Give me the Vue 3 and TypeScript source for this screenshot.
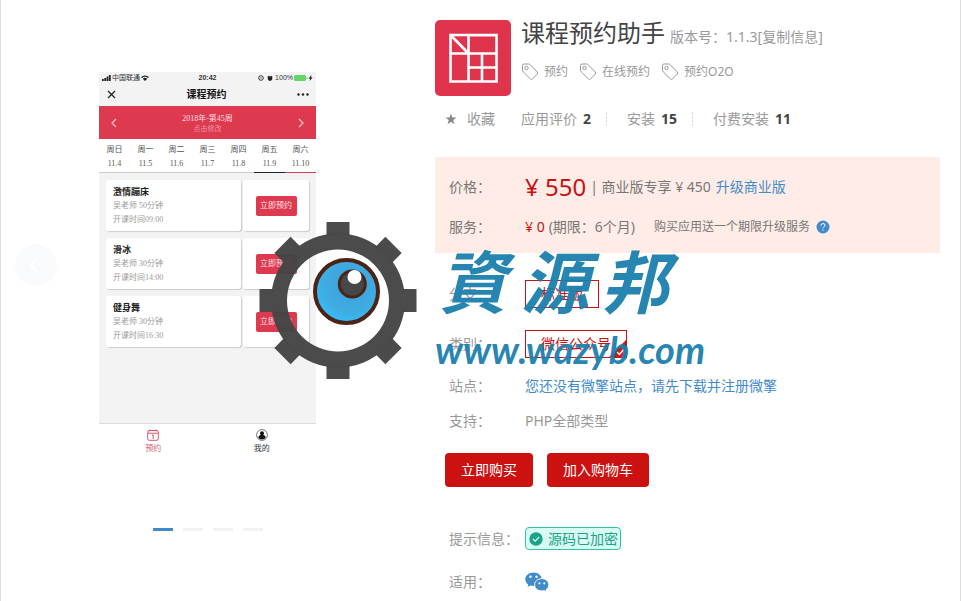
<script setup lang="ts">
import { ref } from 'vue'

interface Day { name: string; date: string }
interface Lesson { title: string; coach: string; time: string }
interface Stat { label: string; value: number }

const days: Day[] = [
  { name: '周日', date: '11.4' },
  { name: '周一', date: '11.5' },
  { name: '周二', date: '11.6' },
  { name: '周三', date: '11.7' },
  { name: '周四', date: '11.8' },
  { name: '周五', date: '11.9' },
  { name: '周六', date: '11.10' },
]

const lessons: Lesson[] = [
  { title: '激情蹦床', coach: '吴老师 50分钟', time: '开课时间09:00' },
  { title: '滑冰', coach: '吴老师 30分钟', time: '开课时间14:00' },
  { title: '健身舞', coach: '吴老师 30分钟', time: '开课时间16:30' },
]

const tags: string[] = ['预约', '在线预约', '预约O2O']

const stats: Stat[] = [
  { label: '应用评价', value: 2 },
  { label: '安装', value: 15 },
  { label: '付费安装', value: 11 },
]

const gearAngles: number[] = [0, 45, 90, 135, 180, 225, 270, 315]
const slideCount = 4
const slide = ref(0)

function previous(): void {
  slide.value = (slide.value + slideCount - 1) % slideCount
}
</script>

<template>
  <main class="page">
    <section class="gallery">
      <button class="prev" type="button" aria-label="上一张" @click="previous">
        <svg width="10" height="16" viewBox="0 0 10 16"><path d="M8 1 2 8l6 7" fill="none" stroke="#fff" stroke-width="2" /></svg>
      </button>

      <div class="phone">
        <div class="status">
          <span class="carrier">
            <svg width="9" height="6" viewBox="0 0 9 6"><path d="M0 4h1.8v2H0zM2.3 3h1.8v3H2.3zM4.6 1.5h1.8V6H4.6zM6.9 0h1.8v6H6.9z" fill="#222" /></svg>
            中国联通
            <svg width="8" height="6" viewBox="0 0 8 6"><path d="M0 2a6 6 0 0 1 8 0L7 3a4.500 4.500 0 0 0-6 0zM1.700 3.700a3.400 3.400 0 0 1 4.600 0L4 6z" fill="#222" /></svg>
          </span>
          <span class="clock">20:42</span>
          <span class="battery">
            <svg width="16" height="6" viewBox="0 0 16 6"><circle cx="3" cy="3" r="2.300" fill="none" stroke="#333" /><path d="M2 3h2M10 1l1 .500h2L14 1v3.500L12 6l-2-1.500z" fill="#222" stroke="#222" stroke-width=".5" /></svg>
            100%
            <svg width="19" height="6" viewBox="0 0 19 6"><rect x="0" y="0" width="12" height="6" rx="1.500" fill="#63d765" /><path d="M13 2v2" stroke="#aaa" /><path d="m17.500 0-3 3.500h1.600L15.600 6l3-3.500h-1.600z" fill="#222" /></svg>
          </span>
        </div>
        <div class="bar">
          <svg width="9" height="9" viewBox="0 0 9 9"><path d="m1 1 7 7M8 1 1 8" stroke="#222" stroke-width="1.300" /></svg>
          <b>课程预约</b>
          <svg width="12" height="3" viewBox="0 0 12 3"><g fill="#222"><circle cx="1.500" cy="1.500" r="1.200" /><circle cx="6" cy="1.500" r="1.200" /><circle cx="10.500" cy="1.500" r="1.200" /></g></svg>
        </div>
        <div class="week">
          <svg width="6" height="10" viewBox="0 0 6 10"><path d="M5 1 1 5l4 4" fill="none" stroke="#f7c3ca" stroke-width="1.200" /></svg>
          <div class="week-text"><span>2018年-第45周</span><small>点击修改</small></div>
          <svg width="6" height="10" viewBox="0 0 6 10"><path d="m1 1 4 4-4 4" fill="none" stroke="#f7c3ca" stroke-width="1.200" /></svg>
        </div>
        <div class="days">
          <div v-for="d in days" :key="d.date" class="day"><span>{{ d.name }}</span><span>{{ d.date }}</span></div>
        </div>
        <div class="lessons">
          <article v-for="l in lessons" :key="l.title" class="lesson">
            <div class="lesson-info"><b>{{ l.title }}</b><span>{{ l.coach }}</span><span>{{ l.time }}</span></div>
            <div class="lesson-side"><button type="button" class="book">立即预约</button></div>
          </article>
        </div>
        <div class="tabs">
          <span class="tab tab-on">
            <svg width="12" height="12" viewBox="0 0 12 12"><rect x=".7" y="1.500" width="10.600" height="9.800" rx="1.500" fill="none" stroke="#d4596a" /><path d="M1 4.200h10M3 .500v2M9 .500v2M5 6.500l1.200-.7V10" fill="none" stroke="#d4596a" /></svg>
            预约
          </span>
          <span class="tab">
            <svg width="12" height="12" viewBox="0 0 12 12"><circle cx="6" cy="6" r="5.400" fill="none" stroke="#555" stroke-width=".8" /><circle cx="6" cy="4.300" r="2" fill="#111" /><path d="M2.300 8.500C2.500 6.500 4 6 6 6s3.500.500 3.700 2.500C8.500 11 3.500 11 2.300 8.500z" fill="#111" /></svg>
            我的
          </span>
        </div>
      </div>

      <div class="dots">
        <button v-for="n in slideCount" :key="n" type="button" class="dot" :class="{ current: slide === n - 1 }" :aria-label="'第' + n + '张'" @click="slide = n - 1"></button>
      </div>
    </section>

    <section class="detail">
      <header class="head">
        <svg class="logo" width="76" height="76" viewBox="0 0 76 76">
          <rect width="76" height="76" rx="5" fill="#e0344d" />
          <path d="M15.500 15h46v46.500h-46zM33.500 15v46.500M15.500 33.500h46M47 33.500v28M33.500 47.500h28M15.500 15l18 18.500" fill="none" stroke="#fff" stroke-width="2.600" />
          <path d="M35 16.300h25.200v-1.300H35z" fill="#fff" />
        </svg>
        <div class="head-text">
          <h1>课程预约助手<small>版本号：1.1.3[复制信息]</small></h1>
          <ul class="tags">
            <li v-for="t in tags" :key="t">
              <svg width="18" height="18" viewBox="0 0 18 18"><path d="M1.500 2.500q0-1.500 1.500-1.500h4.500q1 0 1.600.6L16.300 9q1 1 0 2l-4.800 5q-1 1-2 0L2.200 8.800q-.7-.7-.7-1.600z" fill="none" stroke="#999" /><circle cx="5.500" cy="5" r="1.700" fill="none" stroke="#999" /></svg>
              {{ t }}
            </li>
          </ul>
        </div>
      </header>

      <div class="stats">
        <button type="button" class="favorite">
          <svg width="12" height="12" viewBox="0 0 12 12"><path d="m6 .500 1.400 4h4.200L8.200 7l1.300 4.200L6 8.700l-3.500 2.500L3.800 7 .4 4.500h4.200z" fill="#888" /></svg>
          收藏
        </button>
        <span v-for="s in stats" :key="s.label" class="stat">{{ s.label }}<b>{{ s.value }}</b></span>
      </div>

      <div class="price-box">
        <div class="row">
          <span class="label">价格：</span>
          <span class="value"><strong class="price">¥ 550</strong><span class="biz">| 商业版专享 ¥ 450</span><a href="#">升级商业版</a></span>
        </div>
        <div class="row">
          <span class="label">服务：</span>
          <span class="value">
            <span class="fee">¥ 0</span><span class="term">(期限：6个月)</span><span class="gift">购买应用送一个期限升级服务</span>
            <svg width="14" height="14" viewBox="0 0 14 14"><circle cx="7" cy="7" r="6.500" fill="#428bca" /><path d="M5 5.500q0-2 2-2t2 1.800q0 1-1.200 1.700-.8.500-.8 1.300M7 9.500v1.200" fill="none" stroke="#fff" /></svg>
          </span>
        </div>
      </div>

      <div class="options">
        <div class="row"><span class="label">分支：</span><button type="button" class="option">标准版</button></div>
        <div class="row"><span class="label">类别：</span>
          <button type="button" class="option">微信公众号
            <svg class="corner" width="17" height="17" viewBox="0 0 17 17"><path d="M17 0v17H0z" fill="#c81b1b" /><path d="m8 12 2.500 2.500L15 9" fill="none" stroke="#fff" stroke-width="1.400" /></svg>
          </button>
        </div>
      </div>
      <div class="facts">
        <div class="row"><span class="label">站点：</span><a href="#">您还没有微擎站点，请先下载并注册微擎</a></div>
        <div class="row"><span class="label">支持：</span><span>PHP全部类型</span></div>
      </div>
      <div class="actions">
        <button type="button" class="buy">立即购买</button>
        <button type="button" class="buy">加入购物车</button>
      </div>
      <div class="notes">
        <div class="row"><span class="label">提示信息：</span>
          <span class="badge">
            <svg width="14" height="14" viewBox="0 0 14 14"><circle cx="7" cy="7" r="6.700" fill="#1ba38a" /><path d="m4 7 2.200 2.200L10.200 5" fill="none" stroke="#d8fbf3" stroke-width="1.200" /></svg>
            源码已加密
          </span>
        </div>
        <div class="row"><span class="label">适用：</span>
          <svg width="24" height="20" viewBox="0 0 24 20">
            <path d="M8.500.500C4 .500.300 3.400.300 7.200c0 2.200 1.100 4 3 5.300L2.500 15l3-1.500q1.400.400 3 .4C13 13.900 16.700 11 16.700 7.200S13 .500 8.500.500z" fill="#428bca" />
            <path d="M16.800 6.600c-4 0-7.200 2.800-7.200 6.200s3.200 6.200 7.200 6.200q1.300 0 2.600-.4l2.500 1.100-.6-2.200c1.500-1.100 2.500-2.800 2.500-4.700 0-3.400-3.200-6.200-7-6.200z" fill="#428bca" stroke="#fff" />
            <g fill="#fff"><circle cx="5.500" cy="4.800" r="1.200" /><circle cx="11.500" cy="4.800" r="1.200" /><circle cx="14.400" cy="11.300" r="1.100" /><circle cx="19.300" cy="11.300" r="1.100" /></g>
          </svg>
        </div>
      </div>
    </section>

    <svg class="watermark" width="480" height="158" viewBox="0 0 480 158">
      <g transform="translate(81 78.500)" fill="#454545" fill-opacity=".97">
        <path fill-rule="evenodd" d="M0-67a67 67 0 1 0 0 134a67 67 0 1 0 0-134zM0-51a51 51 0 1 1 0 102a51 51 0 1 1 0-102z" />
        <path v-for="a in gearAngles" :key="a" d="M-11.500-78.500h23V-65q-11.500-3-23 0z" :transform="`rotate(${a})`" />
      </g>
      <defs>
        <radialGradient id="iris" cx=".56" cy=".4" r=".62">
          <stop offset="0" stop-color="#3c9fd8" /><stop offset=".72" stop-color="#3fade3" /><stop offset="1" stop-color="#35c0ff" />
        </radialGradient>
      </defs>
      <circle cx="89.500" cy="69.500" r="31.500" fill="url(#iris)" stroke="#4a2517" stroke-width="4" />
      <circle cx="95.300" cy="62" r="13" fill="#474747" stroke="#4a2517" stroke-width="3" />
      <circle cx="97.500" cy="55" r="7" fill="#fff" />
      <g class="brand">
        <text x="182" y="86">資</text><text x="264" y="86">源</text><text x="344" y="86">邦</text>
      </g>
      <text class="site" x="178" y="142">www.wazyb.com</text>
    </svg>
  </main>
</template>

<style>
body { margin: 0; background: #fff; }
</style>

<style scoped>
.page {
  position: relative;
  display: flex;
  box-sizing: border-box;
  min-height: 100vh;
  border: solid #ddd;
  border-width: 0 1px;
  color: #999;
  font: 14px/20px "Noto Sans", "Noto Sans CJK SC", sans-serif;
}
button { font: inherit; padding: 0; border: 0; cursor: pointer; }
a { color: #428bca; text-decoration: none; }
svg { flex: none; }

.gallery { position: relative; flex: 0 0 413px; padding-top: 72px; margin-right: 21px; }
.prev {
  position: absolute; left: 14px; top: 244px; width: 42px; height: 42px;
  display: flex; align-items: center; justify-content: center;
  padding-right: 4px; border-radius: 50%; background: #f8fafc;
}
.phone {
  width: 217px; margin: 0 auto; background: #f3f3f3; color: #333;
  font: 8px/10px "Liberation Serif", "Noto Sans CJK SC", serif;
}
.status {
  display: grid; grid-template-columns: 1fr auto 1fr; align-items: center;
  height: 11px; padding: 0 3px; font-family: "Liberation Sans", "Noto Sans CJK SC", sans-serif; font-size: 7px;
}
.carrier, .battery { display: flex; align-items: center; gap: 1px; white-space: nowrap; }
.battery { justify-content: flex-end; }
.clock { font-weight: 700; }
.bar { display: flex; align-items: center; justify-content: space-between; height: 23px; padding: 0 7px 0 8px; }
.bar b { font-size: 10px; color: #111; }
.week { display: flex; align-items: center; justify-content: space-between; height: 33px; padding: 0 12px; background: #dd3a50; color: #fbdde1; }
.week-text { display: flex; flex-direction: column; align-items: center; padding-top: 3px; }
.week-text small { font-size: 7px; color: #ee97a3; }
.days { display: grid; grid-template-columns: repeat(7, 1fr); background: #fff; }
.day {
  display: flex; flex-direction: column; align-items: center; gap: 4px;
  height: 27px; padding-top: 6px; border-bottom: 1px solid #ccc; color: #555;
}
.day:nth-child(6) { border-color: #222; }
.day:nth-child(7) { border-color: #dd3a50; }
.lessons { display: flex; flex-direction: column; gap: 7px; padding: 7px 7px 76px; }
.lesson { display: flex; gap: 2px; height: 51px; }
.lesson-info, .lesson-side { border-radius: 3px; background: #fff; box-shadow: 1px 1px 1px #ccc; }
.lesson-info { flex: 1; display: flex; flex-direction: column; gap: 4px; padding: 7px 7px 0; color: #999; box-sizing: border-box; }
.lesson-info b { color: #222; font-size: 9px; }
.lesson-side { display: flex; align-items: center; justify-content: center; flex: 0 0 66px; }
.book { width: 41px; height: 20px; border-radius: 2px; background: #dd3a50; color: #fbe3e6; }
.tabs { display: grid; grid-template-columns: 1fr 1fr; padding-top: 5px; border-top: 1px solid #ddd; background: #fff; }
.tab { display: flex; flex-direction: column; align-items: center; gap: 3px; padding-bottom: 2px; }
.tab-on { color: #d4596a; }
.dots { display: flex; justify-content: center; gap: 10px; margin-top: 72px; }
.dot { width: 20px; height: 3px; background: #f2f2f2; }
.dot.current { background: #428bca; }

.detail { flex: 1; min-width: 0; padding: 20px 20px 0 0; }
.head { display: flex; gap: 10px; }
h1 { margin: 0; color: #444; font-size: 24px; line-height: 26px; font-weight: 400; }
h1 small { margin-left: 5px; color: #999; font-size: 14px; }
.tags { display: flex; gap: 11px; margin: 12px 0 0; padding: 0; list-style: none; font-size: 12px; }
.tags li { display: flex; align-items: center; gap: 5px; }
.stats { display: flex; align-items: center; padding: 13px 0 0 10px; }
.favorite { display: flex; align-items: center; gap: 10px; margin-right: 26px; background: none; color: inherit; }
.stat + .stat { margin-left: 15px; padding-left: 21px; background: repeating-linear-gradient(#ddd 0 3px, transparent 3px 4px) left center / 1px 14px no-repeat; }
.stat b { margin-left: 6px; color: #444; }

.row { display: flex; align-items: center; }
.label { flex: 0 0 76px; }
.price-box { margin-top: 28px; padding: 10px 14px 6px; background: #ffece6; color: #777; }
.price-box .row { height: 40px; }
.value { display: flex; align-items: center; }
.price { color: #c11; font-size: 24px; font-weight: 400; }
.biz { margin: 0 5px 0 4px; }
.fee { margin-right: 4px; color: #c11; }
.gift { margin: 0 6px 0 19px; font-size: 12px; }
.options { display: grid; gap: 22px; padding: 27px 0 0 14px; }
.option { position: relative; height: 28px; padding: 0 15px; border: 1px solid #c11; background: #fff; color: #c11; }
.corner { position: absolute; right: 0; bottom: 0; }
.facts { display: grid; gap: 15px; padding: 18px 0 0 14px; }
.actions { display: flex; gap: 14px; padding: 22px 0 0 10px; }
.buy { height: 34px; padding: 0 16px; border-radius: 4px; background: #c11; color: #fff; }
.notes { display: grid; gap: 22px; padding: 40px 0 0 14px; }
.badge {
  display: flex; align-items: center; gap: 5px; box-sizing: border-box; height: 23px; padding: 0 2px 0 3px;
  border: 1px solid #2cc5a8; border-radius: 4px; background: #d8fbf3; color: #1ba38a;
}

.watermark { position: absolute; left: 256px; top: 222px; pointer-events: none; }
.brand { font: italic 700 68px "Noto Sans CJK TC", sans-serif; fill: #1a80ad; fill-opacity: .95; }
.site { font: italic 700 38px Lato, sans-serif; fill: #1a80ad; fill-opacity: .95; }
</style>
